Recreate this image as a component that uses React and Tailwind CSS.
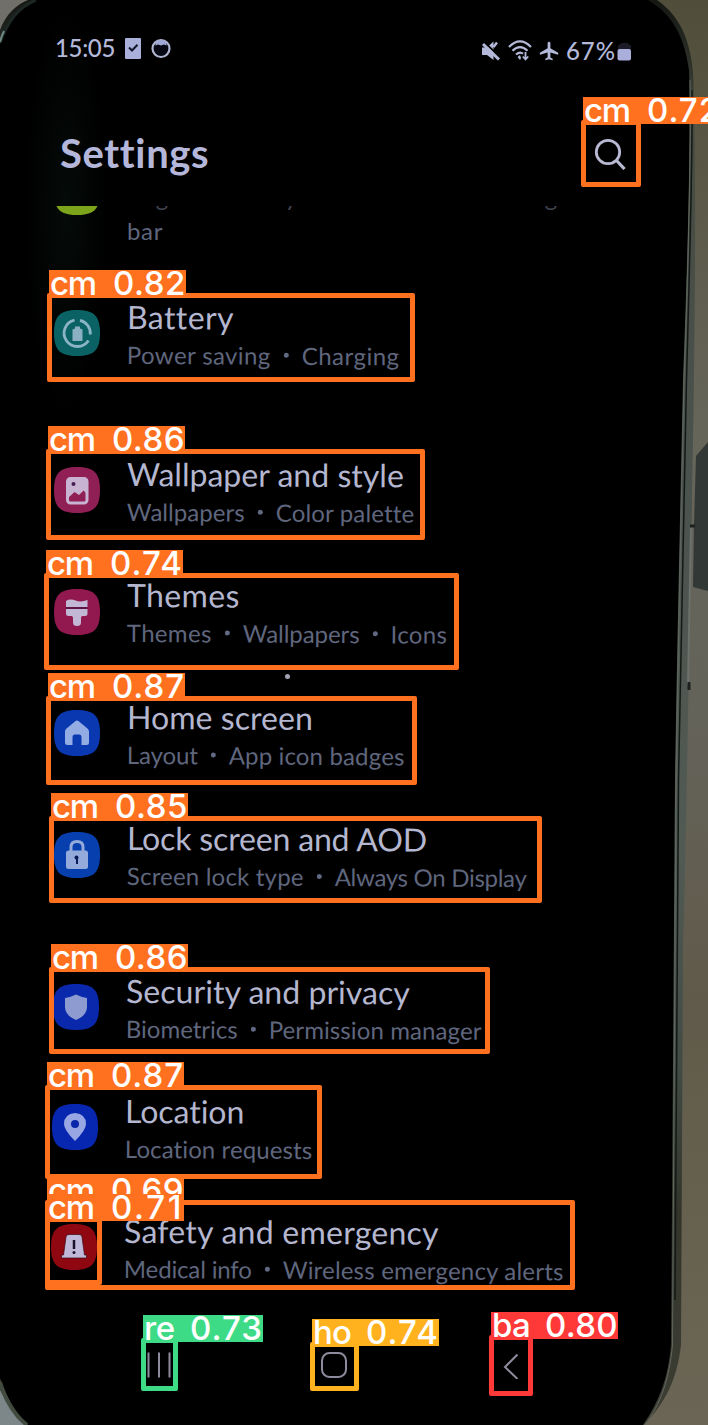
import React, { useLayoutEffect, useRef, useState } from "react";
import { MdAirplanemodeActive } from "react-icons/md";

/* Text spread over a given width by letter spacing. */
function Fit({ width, className = "", children }) {
  const ref = useRef(null);
  const [spacing, setSpacing] = useState(0);
  useLayoutEffect(() => {
    const natural = ref.current.getBoundingClientRect().width;
    setSpacing((width - natural) / String(children).length);
  }, [width, children]);
  return (
    <span ref={ref} className={"inline-block whitespace-pre " + className} style={{ letterSpacing: spacing }}>
      {children}
    </span>
  );
}

function PhoneBody() {
  return (
    <svg className="absolute inset-0 h-[1425px] w-[708px]" viewBox="0 0 708 1425" aria-hidden="true">
      <defs>
        <linearGradient id="wall" x1="0" y1="0" x2="0" y2="1">
          <stop offset="0" stopColor="#514d3b" />
          <stop offset="0.07" stopColor="#565341" />
          <stop offset="0.3" stopColor="#66655a" />
          <stop offset="0.5" stopColor="#64635a" />
          <stop offset="0.7" stopColor="#605a4a" />
          <stop offset="0.85" stopColor="#66614f" />
          <stop offset="1" stopColor="#6b6555" />
        </linearGradient>
        <linearGradient id="frame" x1="0" y1="0" x2="0" y2="1">
          <stop offset="0" stopColor="#141712" />
          <stop offset="0.04" stopColor="#2a2e27" />
          <stop offset="0.08" stopColor="#464b41" />
          <stop offset="0.35" stopColor="#4b534e" />
          <stop offset="0.6" stopColor="#525a54" />
          <stop offset="0.75" stopColor="#414a44" />
          <stop offset="0.85" stopColor="#33352b" />
          <stop offset="1" stopColor="#3d3e33" />
        </linearGradient>
        <radialGradient id="glow">
          <stop offset="0" stopColor="#050b09" />
          <stop offset="1" stopColor="#000" />
        </radialGradient>
      </defs>
      <rect width="708" height="1425" fill="url(#wall)" />
      <path d="M0 0H40L0 50Z" fill="#716f69" />
      <path d="M0 1375L45 1425H0Z" fill="#7d8789" />
      <path d="M708 442L696 456L694 526L693 587L708 591Z" fill="#323835" />
      <path d="M0 30C6 14 16 5 28 0H657C680 16 690 40 693 72C696 130 696 300 692 500C689 650 687 800 683 950L681 1345C677 1380 665 1403 644 1425H25C12 1412 5 1400 0 1390Z" fill="url(#frame)" />
      <path d="M0 44C8 22 18 8 36 0H648C673 15 684 36 689 70C691 130 688 250 683 380C680 520 677 650 675 780L671 1345C668 1380 658 1403 643 1425H28C15 1412 6 1396 0 1378Z" fill="#000" />
      <path d="M690 80C691 130 689 250 684 380C681 520 678 650 676 780L672.500 1345C669 1380 661 1403 645 1425" fill="none" stroke="#5f675e" strokeWidth="1" />
      <path d="M692 90C693 150 690 250 686.500 380C683 520 680 650 678.500 780L675 1300" fill="none" stroke="#131916" strokeWidth="1.500" />
      <path d="M0 43C8 21 18 7 36 0" fill="none" stroke="#1d2724" strokeWidth="3" />
      <path d="M0 42C1 38 2 35 4 31" fill="none" stroke="#6d8983" strokeWidth="2" />
      <path d="M0 1382C6 1402 14 1415 27 1425" fill="none" stroke="#424b3f" strokeWidth="4" />
      <path d="M691 526L688 685" stroke="#6c716b" strokeWidth="2" />
      <path d="M690 526h5M689 682v8" stroke="#1d211e" strokeWidth="3" />
      <ellipse cx="66" cy="210" rx="40" ry="200" fill="url(#glow)" />
    </svg>
  );
}

function StatusBar() {
  return (
    <div className="flex h-[24px] justify-between pl-[55px] pr-[76px] text-[#b4b9d9]">
      <div className="flex h-[24px] items-center">
        <Fit width={60} className="text-[24px] leading-[24px] font-medium">15:05</Fit>
        <svg className="ml-[10px] h-[21px] w-[16px]" viewBox="0 0 16 21">
          <rect width="16" height="21" rx="1" fill="#a9b0da" />
          <path d="M4 9.500L7 12.500L12.500 6.800" fill="none" stroke="#11172c" strokeWidth="2" />
        </svg>
        <svg className="ml-[10px] h-[21px] w-[20px]" viewBox="0 0 20 21">
          <circle cx="10" cy="10.500" r="8.500" fill="#060914" stroke="#b0b5d0" strokeWidth="2.200" />
          <path d="M4.500 4Q10-.5 15.500 4V7.500L13 6.500L10 7.500L7 6.500L4.500 7.500Z" fill="#a0a9d4" />
        </svg>
      </div>
      <div className="flex h-[30px] items-center">
        <svg className="mr-[7px] h-[22px] w-[20px]" viewBox="0 0 20 22">
          <path d="M1 7.500H6L12.500 1.500V20L6 15H1Z" fill="currentColor" />
          <path d="M12.500 7L16 2.500" stroke="currentColor" strokeWidth="2.500" />
          <path d="M3 2L19 17" stroke="#000" strokeWidth="2" />
          <path d="M2 4L18 19.500" stroke="currentColor" strokeWidth="3" />
        </svg>
        <svg className="mr-[6px] h-[22px] w-[24px]" viewBox="0 0 24 22" fill="none" stroke="currentColor" strokeWidth="2.200">
          <path d="M1 7Q12-4 23 7M4.500 10.800Q12 3.500 19.500 10.800M8 14.500Q12 11 15 13.800" />
          <path d="M9.500 17L12 15L13 18L12 20Z" fill="currentColor" stroke="none" />
          <path d="M17.500 12v6M14.800 16.500L17.500 19.500L20.200 16.500" strokeWidth="1.800" />
        </svg>
        <MdAirplanemodeActive className="mr-[6px] size-[22px]" />
        <Fit width={50} className="text-[24px] leading-[30px] font-medium">67%</Fit>
        <svg className="ml-[1px] h-[19px] w-[15px]" viewBox="0 0 15 19">
          <path d="M3 3Q3 1 5 1H10Q12 1 12 3H14V7H1V3Z" fill="#1b1c28" />
          <rect x="0.500" y="7" width="13.500" height="11.500" rx="2" fill="#a9aedb" />
        </svg>
      </div>
    </div>
  );
}

const GLYPHS = {
  battery: (
    <>
      <g fill="none" stroke="#8bb4c4" strokeWidth="2.800">
        <path d="M20.500 10.200A13.300 13.300 0 1 0 34.500 30.500" />
        <path d="M26 10.400A13.300 13.300 0 0 1 36.300 24.500" />
      </g>
      <path d="M18.500 19.500L21 18.500V16.500H26V18.500L28.500 19.500V31H18.500Z" fill="#8bb0c2" />
    </>
  ),
  wallpaper: (
    <>
      <rect x="13.500" y="11.500" width="19.500" height="24.500" rx="3" fill="none" stroke="#c8b3d3" strokeWidth="3" />
      <path d="M14 12H33V27L29.500 23.500L25 28L20.500 25L14 31Z" fill="#c8b3d3" />
      <circle cx="19.500" cy="17" r="2" fill="#461c51" />
    </>
  ),
  themes: (
    <g fill="#c3b7d6">
      <path d="M12 12Q16 9.500 21.500 11.500T33.500 11V18H12Z" />
      <path d="M12 20H33.500V24.500Q33.500 27 31 27H28.500Q27 27 27 29V33.500Q27 37 23 37T19 33.500V29Q19 27 17.500 27H14.500Q12 27 12 24.500Z" />
      <path d="M12 19H33.500" stroke="#451743" strokeWidth="1.300" />
    </g>
  ),
  home: <path d="M23 10.500Q24 10.500 25 11.500L33.500 18.500Q35 20 35 21.500V32.500Q35 35 32.500 35H27.500V27Q27.500 24.500 25.500 24.500H20.500Q18.500 24.500 18.500 27V35H13.500Q11 35 11 32.500V21.500Q11 20 12.500 18.500L21 11.500Q22 10.500 23 10.500Z" fill="#94ace4" />,
  lock: (
    <>
      <path d="M17 20V15Q17 9.500 23 9.500T29 15V20" fill="none" stroke="#93aadb" strokeWidth="3" />
      <rect x="12" y="18.500" width="22" height="18.500" rx="2.500" fill="#93aadb" />
      <path d="M23 25V32" stroke="#0b1b55" strokeWidth="2" />
      <circle cx="22.500" cy="25.500" r="2" fill="#0b1b55" />
    </>
  ),
  shield: <path d="M23 10.500Q28 13 34 14V23Q34 31.500 23 36Q12 31.500 12 23V14Q18 13 23 10.500Z" fill="#8d9bd0" />,
  pin: (
    <>
      <path d="M23 9Q34 10 34 20Q34 26 23 37Q12 26 12 20Q12 10 23 9Z" fill="#98a7e4" />
      <circle cx="23" cy="20" r="4" fill="#0927ab" />
    </>
  ),
  siren: (
    <>
      <path d="M15 13Q15 10.500 18 10.500H28Q31 10.500 31 13L33.500 31H35.500V34H10.500V31H12.500Z" fill="#c0b8d8" stroke="#3a0717" strokeWidth=".7" />
      <path d="M23 16V25" stroke="#1d102b" strokeWidth="2.500" />
      <circle cx="23" cy="28.500" r="1.500" fill="#1d102b" />
    </>
  ),
};

function AppIcon({ name, color }) {
  return (
    <svg className="size-[46px] shrink-0" viewBox="0 0 46 46">
      <path d="M23 0C40 0 46 6 46 23S40 46 23 46S0 40 0 23S6 0 23 0Z" fill={color} />
      {GLYPHS[name]}
    </svg>
  );
}

const GROUPS = [
  {
    spacing: "pb-[83px]",
    rows: [
      { icon: "battery", color: "#0b6264", title: ["Battery", 106], parts: [["Power saving", 144], ["Charging", 98]], indent: "pl-[54px]" },
    ],
  },
  {
    spacing: "gap-[47.5px] pb-[78.5px]",
    rows: [
      { icon: "wallpaper", color: "#8f1f54", title: ["Wallpaper and style", 277], parts: [["Wallpapers", 118], ["Color palette", 138]], indent: "pl-[54px]" },
      { icon: "themes", color: "#91194f", title: ["Themes", 113], parts: [["Themes", 85], ["Wallpapers", 117], ["Icons", 57]], indent: "pl-[54px]" },
      { icon: "home", color: "#0938b0", title: ["Home screen", 186], parts: [["Layout", 71], ["App icon badges", 176]], indent: "pl-[54px]" },
      { icon: "lock", color: "#0740ae", title: ["Lock screen and AOD", 300], parts: [["Screen lock type", 177], ["Always On Display", 192]], indent: "pl-[53.5px]" },
    ],
  },
  {
    spacing: "gap-[46px]",
    rows: [
      { icon: "shield", color: "#0928ab", title: ["Security and privacy", 284], parts: [["Biometrics", 112], ["Permission manager", 213]], indent: "pl-[53px]" },
      { icon: "pin", color: "#0827b0", title: ["Location", 120], parts: [["Location requests", 188]], indent: "pl-[52px]" },
      { icon: "siren", color: "#8e0711", title: ["Safety and emergency", 315], parts: [["Medical info", 128], ["Wireless emergency alerts", 281]], indent: "pl-[51px]" },
    ],
  },
];

function SettingRow({ icon, color, title, parts, indent }) {
  return (
    <div className={"flex h-[74px] items-center " + indent}>
      <AppIcon name={icon} color={color} />
      <div className="ml-[27px] flex origin-left rotate-[0.3deg] flex-col items-start">
        <Fit width={title[1]} className="text-[32px] leading-[40px] text-[#b4b7cf]">{title[0]}</Fit>
        <div className="mt-[2px] flex h-[31px] items-center text-[24px] leading-[30px] text-[#5f667d]">
          {parts.map(([text, width], i) => (
            <React.Fragment key={text}>
              {i > 0 && <span className="mx-[13px] size-[5px] rounded-full bg-[#626983]" />}
              <Fit width={width}>{text}</Fit>
            </React.Fragment>
          ))}
        </div>
      </div>
    </div>
  );
}

function NavBar() {
  return (
    <div className="mt-[66px] flex h-[30px] items-center pl-[146px] text-[#8d8c9e]">
      <svg className="h-[28px] w-[26px]" viewBox="0 0 26 28" stroke="currentColor" strokeWidth="2">
        <path d="M2.500 1.500V26.500M13 1.500V26.500M23.500 1.500V26.500" />
      </svg>
      <svg className="ml-[148px] h-[28px] w-[28px]" viewBox="0 0 28 28" fill="none" stroke="currentColor" strokeWidth="2">
        <rect x="2" y="2" width="24" height="24" rx="7.500" />
      </svg>
      <svg className="ml-[154px] h-[28px] w-[18px]" viewBox="0 0 18 28" fill="none" stroke="currentColor" strokeWidth="2">
        <path d="M15.500 3.500L3 16L15.500 28" />
      </svg>
    </div>
  );
}

const TONES = {
  cm: ["border-[#ff701f]", "w-[137px] bg-[#ff701f]", 46],
  re: ["border-[#3ddb86]", "w-[120px] bg-[#3ddb86]", 31],
  ho: ["border-[#ffb21d]", "w-[127px] bg-[#ffb21d]", 38],
  ba: ["border-[#ff3838]", "w-[127px] bg-[#ff3838]", 38],
};

/* A detected region: its frame, with the class tag sitting on the top edge. */
function Detection({ name, score, className }) {
  const [border, tag, nameWidth] = TONES[name];
  return (
    <div className={"absolute flex items-start rounded-[2px] border-5 " + border + " " + className}>
      <div className={"-mt-[28px] -ml-[3px] flex h-[27px] shrink-0 items-center justify-between pl-[1px] font-['Inter',sans-serif] text-[33px] leading-[27px] font-medium text-white " + tag}>
        <Fit width={nameWidth}>{name}</Fit>
        <Fit width={73}>{score}</Fit>
      </div>
    </div>
  );
}

export default function App() {
  return (
    <div className="relative h-[1425px] w-[708px] overflow-hidden bg-black font-['Lato',sans-serif]">
      <PhoneBody />
      <div className="relative flex h-full flex-col pt-[36px]">
        <StatusBar />
        <div className="mt-[68px] flex h-[50px] items-center justify-between pl-[60px] pr-[81px]">
          <h1 className="text-[40px] leading-[48px] font-bold text-[#b4b7da]">
            <Fit width={148}>Settings</Fit>
          </h1>
          <svg className="h-[34px] w-[34px]" viewBox="0 0 34 34" fill="none" stroke="#b7bad2" strokeWidth="2.800">
            <circle cx="15" cy="16" r="11.700" />
            <path d="M23.500 24.500L31.500 33" strokeWidth="3.200" />
          </svg>
        </div>
        <div className="mt-[28px] flex h-[9px] items-end overflow-hidden pl-[54px]">
          <svg className="size-[46px] shrink-0" viewBox="0 0 46 46">
            <path d="M23 0C40 0 46 6 46 23S40 46 23 46S0 40 0 23S6 0 23 0Z" fill="#7da51c" />
          </svg>
          <Fit width={482} className="ml-[27px] text-[24px] leading-[36px] text-[#3f434e]">
            Brightness  •  Eye comfort shield  •  Navigation
          </Fit>
        </div>
        <div className="h-[28px] pl-[127px] text-[24px] leading-[32px] text-[#5f667d]">
          <Fit width={36}>bar</Fit>
        </div>
        <div className="mt-[53px] flex flex-col">
          {GROUPS.map(({ spacing, rows }) => (
            <section key={rows[0].icon} className={"flex flex-col " + spacing}>
              {rows.map((row) => (
                <SettingRow key={row.icon} {...row} />
              ))}
            </section>
          ))}
        </div>
        <NavBar />
      </div>
      <div className="absolute left-[285px] top-[674px] size-[5px] rounded-full bg-[#a2a3b5]" />
      <Detection name="cm" score="0.72" className="left-[581px] top-[120px] h-[67px] w-[60px]" />
      <Detection name="cm" score="0.82" className="left-[47px] top-[293px] h-[89px] w-[368px]" />
      <Detection name="cm" score="0.86" className="left-[46px] top-[449px] h-[91px] w-[379px]" />
      <Detection name="cm" score="0.74" className="left-[44px] top-[573px] h-[97px] w-[415px]" />
      <Detection name="cm" score="0.87" className="left-[46px] top-[696px] h-[89px] w-[371px]" />
      <Detection name="cm" score="0.85" className="left-[49px] top-[816px] h-[87px] w-[493px]" />
      <Detection name="cm" score="0.86" className="left-[49px] top-[967px] h-[87px] w-[441px]" />
      <Detection name="cm" score="0.87" className="left-[45px] top-[1085px] h-[94px] w-[277px]" />
      <Detection name="cm" score="0.69" className="left-[45px] top-[1200px] h-[90px] w-[530px]" />
      <Detection name="cm" score="0.71" className="left-[45px] top-[1217px] h-[68px] w-[57px]" />
      <Detection name="re" score="0.73" className="left-[141px] top-[1338px] h-[53px] w-[37px]" />
      <Detection name="ho" score="0.74" className="left-[310px] top-[1342px] h-[49px] w-[49px]" />
      <Detection name="ba" score="0.80" className="left-[489px] top-[1335px] h-[61px] w-[44px]" />
    </div>
  );
}
